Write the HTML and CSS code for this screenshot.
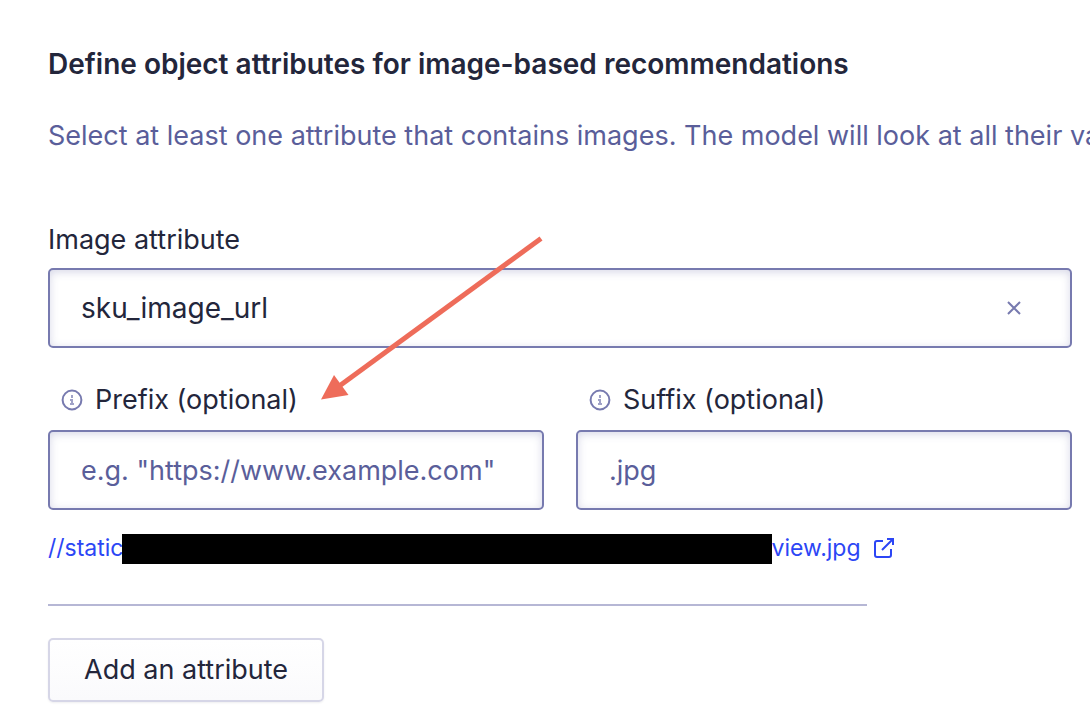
FILE: index.html
```html
<!DOCTYPE html>
<html lang="en">
<head>
<meta charset="UTF-8">
<meta name="viewport" content="width=device-width, initial-scale=1">
<title>Image attributes</title>
<link rel="stylesheet" href="styles.css">
</head>

<body>

<main class="panel">
    <h1 class="title">Define object attributes for image-based recommendations</h1>
    <p class="intro">Select at least one attribute that contains images. The model will look at all their values.</p>

    <form class="form">
        <div class="field">
            <label class="label" for="attribute">Image attribute</label>
            <div class="input-wrapper">
                <input class="input input-value" id="attribute" type="text" value="sku_image_url">
                <button class="clear" type="button" aria-label="Clear">
                    <svg width="16" height="16" viewBox="0 0 16 16" fill="none" stroke="currentColor" stroke-width="2">
                        <path d="M2 2l12 12M14 2L2 14"/>
                    </svg>
                </button>
            </div>
        </div>

        <div class="row">
            <div class="field field-hint">
                <label class="label label-hint" for="prefix">
                    <svg class="info" width="22" height="22" viewBox="0 0 22 22" fill="none" stroke="currentColor" stroke-width="2">
                        <circle cx="11" cy="11" r="9.4"/>
                        <path d="M11 6v3M9 11h2v4M9 15h4" opacity="0.7"/>
                    </svg>
                    Prefix (optional)
                </label>
                <input class="input" id="prefix" type="text" placeholder='e.g. "https://www.example.com"'>
            </div>
            <div class="field field-hint">
                <label class="label label-hint" for="suffix">
                    <svg class="info" width="22" height="22" viewBox="0 0 22 22" fill="none" stroke="currentColor" stroke-width="2">
                        <circle cx="11" cy="11" r="9.4"/>
                        <path d="M11 6v3M9 11h2v4M9 15h4" opacity="0.7"/>
                    </svg>
                    Suffix (optional)
                </label>
                <input class="input" id="suffix" type="text" placeholder=".jpg">
            </div>
        </div>

        <!-- arrow pointing at the prefix label -->
        <svg class="arrow" width="224" height="166" viewBox="0 0 224 166">
            <path d="M221 2.500L20 149.500" stroke="#ee6c5a" stroke-width="5"/>
            <path d="M1 163.500L14 139l14.500 20z" fill="#ee6c5a"/>
        </svg>
    </form>

    <a class="preview" href="#">
        <span>//static</span>
        <span class="redacted"></span>
        <span>view.jpg</span>
        <svg class="external" width="22" height="22" viewBox="0 0 22 22" fill="none" stroke="currentColor" stroke-width="2">
            <path d="M10 4H4a2 2 0 0 0-2 2v12a2 2 0 0 0 2 2h12a2 2 0 0 0 2-2v-6"/>
            <path d="M9 13L20 2M14 2h6v6"/>
        </svg>
    </a>

    <hr class="divider">

    <button class="add" type="button">Add an attribute</button>
</main>

</body>
</html>
```

FILE: styles.css
```css
* {
    box-sizing: border-box;
}

body {
    margin: 0;
    background-color: #fff;
    color: #23263b;
    font-family: Inter, "Liberation Sans", sans-serif;
    font-size: 27px;
    line-height: 32px;
}

.panel {
    padding: 48px 18px 12px 48px;
    overflow: hidden;
}

.title {
    margin: 0;
    font-size: 28px;
    font-weight: 600;
    white-space: nowrap;
}

.intro {
    margin: 40px 0 72px;
    color: #5a5e9a;
    white-space: nowrap;
}

.form {
    position: relative;
    display: flex;
    flex-direction: column;
    gap: 36px;
}

.field {
    display: flex;
    flex-direction: column;
    gap: 12px;
}

.field-hint {
    gap: 14px;
}

.row {
    display: grid;
    grid-template-columns: 1fr 1fr;
    gap: 32px;
}

.label-hint {
    display: flex;
    align-items: center;
    gap: 12px;
    padding-left: 13px;
}

.info {
    color: #777aaf;
}

.input-wrapper {
    position: relative;
}

.input {
    width: 100%;
    height: 80px;
    padding: 0 31px;
    border: 2px solid #777aaf;
    border-radius: 5px;
    background-color: #fff;
    box-shadow: inset 0 2px 8px rgba(119, 122, 175, 0.3);
    color: inherit;
    font: inherit;
}

.input-value {
    font-size: 28px;
}

.input::placeholder {
    color: #5a5e9a;
    opacity: 1;
}

.clear {
    position: absolute;
    top: 0;
    right: 34px;
    bottom: 0;
    display: flex;
    align-items: center;
    justify-content: center;
    width: 48px;
    padding: 0;
    border: 0;
    background: none;
    color: #777aaf;
}

.arrow {
    position: absolute;
    top: 12px;
    left: 272px;
    pointer-events: none;
}

.preview {
    display: flex;
    align-items: flex-end;
    margin-top: 22px;
    color: #2c46f5;
    font-size: 23px;
    text-decoration: none;
}

.redacted {
    width: 650px;
    height: 30px;
    margin-left: -2px;
    background-color: #000;
}

.external {
    align-self: center;
    margin-left: 12px;
}

.divider {
    width: 80%;
    height: 2px;
    margin: 40px 0 32px;
    border: 0;
    background-color: #b6b7d5;
}

.add {
    height: 64px;
    padding: 0 34px;
    border: 2px solid #d6d6e7;
    border-radius: 5px;
    background: linear-gradient(#fff, #fafafc);
    box-shadow: 0 1px 2px rgba(35, 38, 59, 0.08);
    color: inherit;
    font: inherit;
}
```
